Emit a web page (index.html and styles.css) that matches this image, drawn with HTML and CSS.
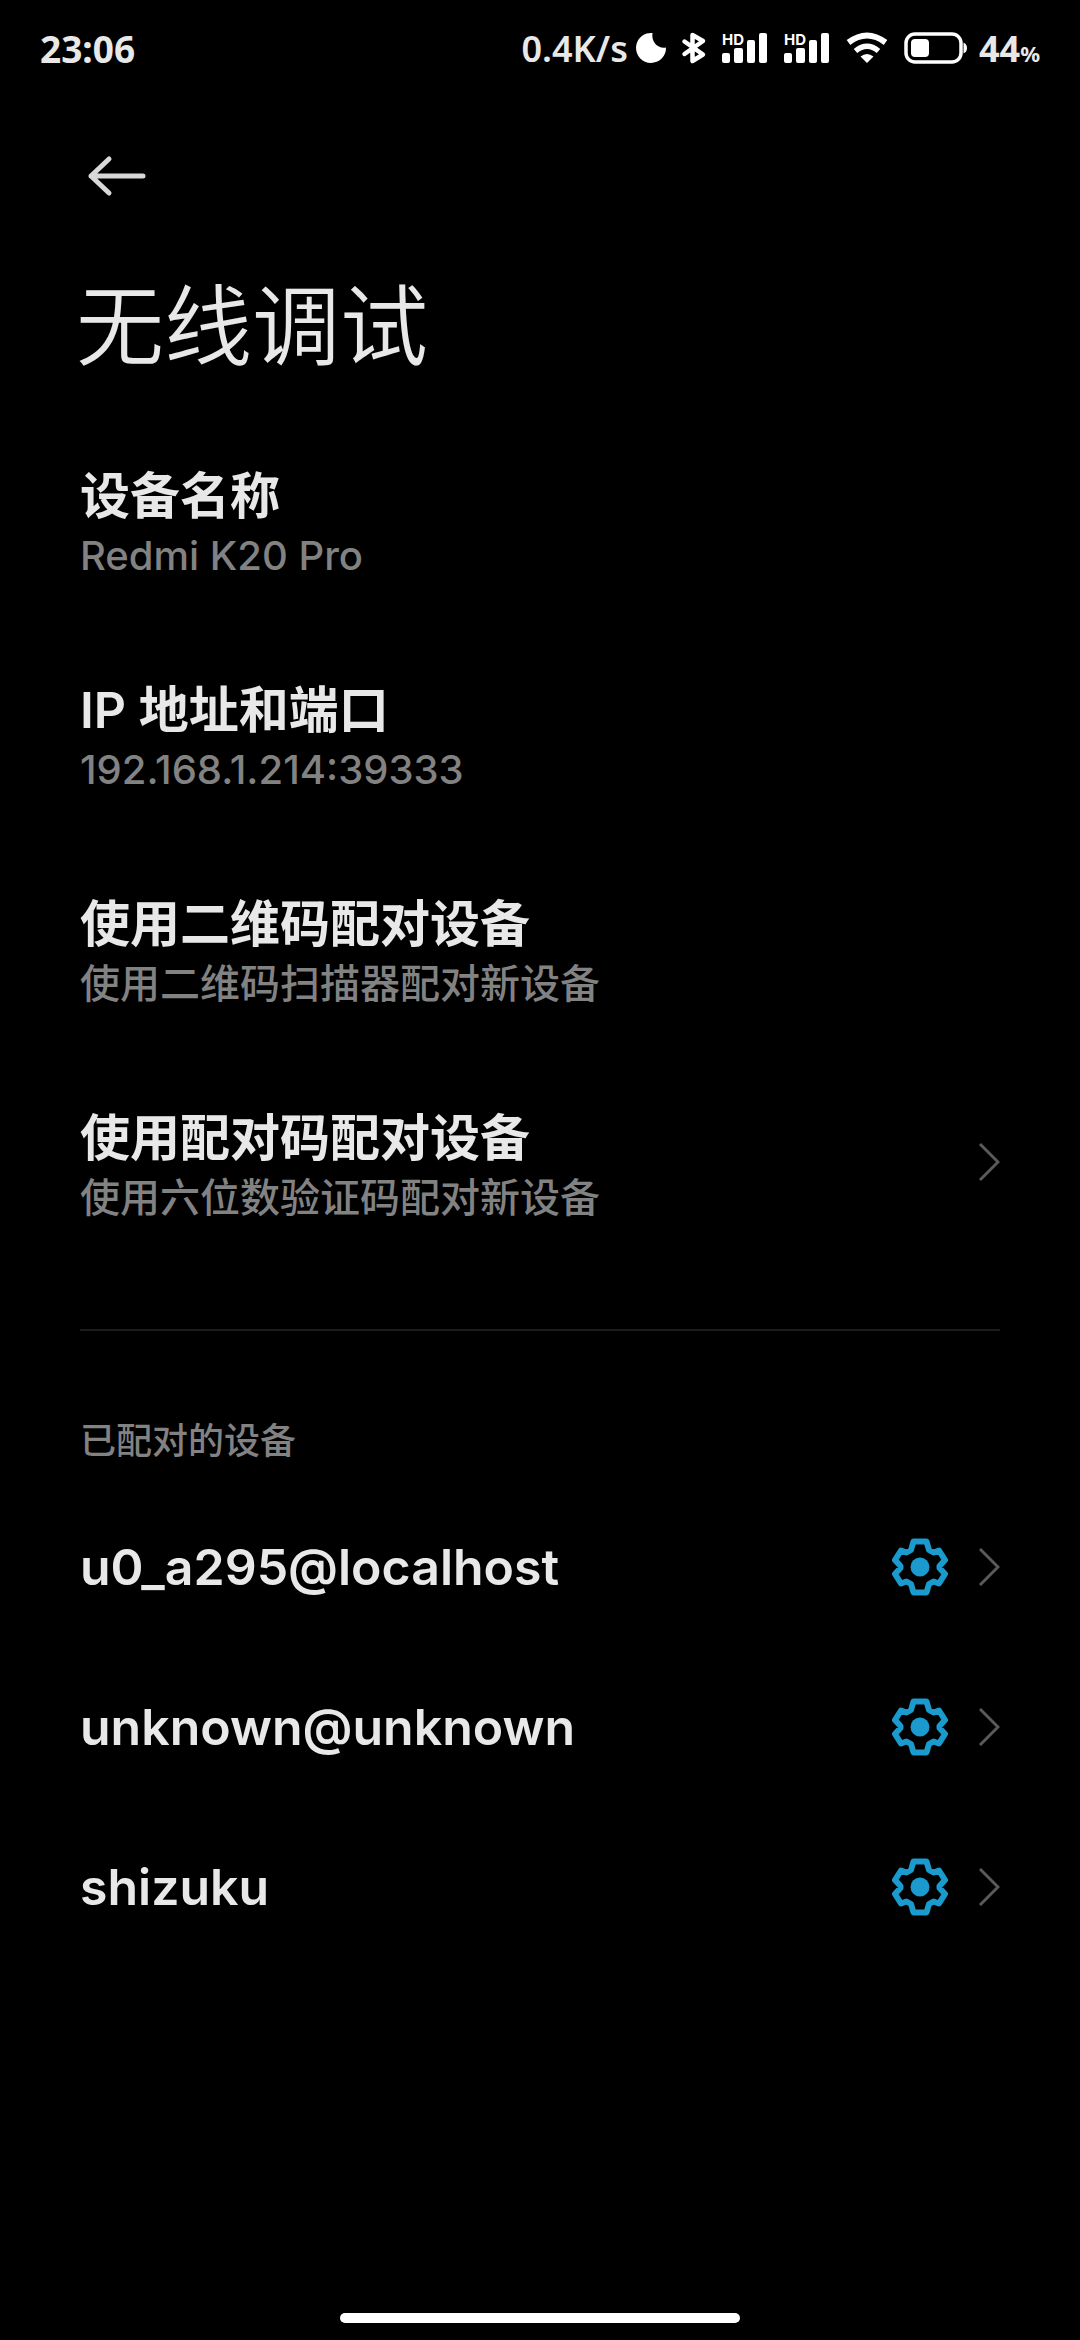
FILE: index.html
```
<!DOCTYPE html>
<html lang="zh-CN">
<head>
    <meta charset="UTF-8">
    <meta name="viewport" content="width=device-width, initial-scale=1.0">
    <title>无线调试</title>
    <link rel="stylesheet" href="styles.css">
</head>
<body>
    <!-- shared icons -->
    <svg class="sprite" width="0" height="0" aria-hidden="true">
        <symbol id="chevron" viewBox="0 0 22 40">
            <path d="M2 2 L20 20 L2 38" fill="none" stroke="#5a5a5a" stroke-width="3"/>
        </symbol>
        <symbol id="gear" viewBox="0 0 56 58">
            <path d="M21.500 3.500 H34.500 L37 12 L41.500 14.500 L47 12.500 L53 22 L47.500 28 V30 L53 36 L47 45.500 L41.500 43.500 L37 46 L34.500 54.500 H21.500 L19 46 L14.500 43.500 L9 45.500 L3 36 L8.500 30 V28 L3 22 L9 12.500 L14.500 14.500 L19 12 Z" fill="none" stroke="#1a9acd" stroke-width="6" stroke-linejoin="round"/>
            <circle cx="28" cy="29" r="9.500" fill="#1a9acd"/>
        </symbol>
    </svg>

    <div class="status-bar">
        <span class="time">23:06</span>
        <div class="status-icons">
            <span class="speed">0.4K/s</span>
            <svg class="moon" viewBox="0 0 30 32" width="30" height="32">
                <path d="M16.500 1 A15 15 0 1 0 30 15.500 C22 17 15 10 16.500 1 Z"/>
            </svg>
            <svg class="bluetooth" viewBox="0 0 24 32" width="24" height="32">
                <path d="M2.500 9.500 L21 22.500 L10.500 29 V3 L21 9 L2.500 22" fill="none" stroke="#fff" stroke-width="4.500" stroke-linejoin="round" stroke-linecap="round"/>
            </svg>
            <svg class="signal" viewBox="0 0 46 32" width="46" height="32">
                <text x="0" y="13" class="hd">HD</text>
                <rect x="0" y="21" width="8" height="10" rx="2"/>
                <rect x="12" y="16" width="9" height="15" rx="2"/>
                <rect x="25" y="8" width="8" height="23" rx="2"/>
                <rect x="37" y="1" width="8" height="30" rx="2"/>
            </svg>
            <svg class="signal" viewBox="0 0 46 32" width="46" height="32">
                <text x="0" y="13" class="hd">HD</text>
                <rect x="0" y="21" width="8" height="10" rx="2"/>
                <rect x="12" y="16" width="9" height="15" rx="2"/>
                <rect x="25" y="8" width="8" height="23" rx="2"/>
                <rect x="37" y="1" width="8" height="30" rx="2"/>
            </svg>
            <svg class="wifi" viewBox="0 0 42 32" width="42" height="32">
                <path d="M2.500 10.500 Q21 -3.500 39.500 10.500" fill="none" stroke="#fff" stroke-width="6"/>
                <path d="M9.500 19 Q21 9.500 32.500 19" fill="none" stroke="#fff" stroke-width="5.500"/>
                <path d="M14.500 24.500 Q21 19.500 27.500 24.500 L21 31 Z"/>
            </svg>
            <svg class="battery" viewBox="0 0 64 32" width="64" height="32">
                <rect x="2" y="2" width="55" height="28" rx="9" fill="none" stroke="#fff" stroke-width="3.500"/>
                <rect x="7" y="7" width="18" height="18" rx="4"/>
                <path d="M59.500 10.500 Q63 12 63 16 Q63 20 59.500 21.500 Z"/>
            </svg>
            <span class="percent">44<small>%</small></span>
        </div>
    </div>

    <header>
        <button class="back" aria-label="返回">
            <svg viewBox="0 0 58 40" width="58" height="40">
                <path d="M21 3 L3 20 L21 37 M3 20 H55" fill="none" stroke="#d8d8d8" stroke-width="5" stroke-linecap="round" stroke-linejoin="round"/>
            </svg>
        </button>
        <h1>无线调试</h1>
    </header>

    <main>
        <div class="item">
            <div class="item-text">
                <span class="item-title">设备名称</span>
                <span class="item-summary">Redmi K20 Pro</span>
            </div>
        </div>
        <div class="item">
            <div class="item-text">
                <span class="item-title">IP 地址和端口</span>
                <span class="item-summary">192.168.1.214:39333</span>
            </div>
        </div>
        <button class="item">
            <span class="item-text">
                <span class="item-title">使用二维码配对设备</span>
                <span class="item-summary">使用二维码扫描器配对新设备</span>
            </span>
        </button>
        <button class="item">
            <span class="item-text">
                <span class="item-title">使用配对码配对设备</span>
                <span class="item-summary">使用六位数验证码配对新设备</span>
            </span>
            <svg class="chevron" width="22" height="40"><use href="#chevron"/></svg>
        </button>

        <section class="paired">
            <h2>已配对的设备</h2>
            <button class="device">
                <span class="item-title">u0_a295@localhost</span>
                <svg class="gear" width="56" height="58"><use href="#gear"/></svg>
                <svg class="chevron" width="22" height="40"><use href="#chevron"/></svg>
            </button>
            <button class="device">
                <span class="item-title">unknown@unknown</span>
                <svg class="gear" width="56" height="58"><use href="#gear"/></svg>
                <svg class="chevron" width="22" height="40"><use href="#chevron"/></svg>
            </button>
            <button class="device">
                <span class="item-title">shizuku</span>
                <svg class="gear" width="56" height="58"><use href="#gear"/></svg>
                <svg class="chevron" width="22" height="40"><use href="#chevron"/></svg>
            </button>
        </section>
    </main>

    <div class="home-bar"></div>
</body>
</html>
```
FILE: styles.css
```
* {
    box-sizing: border-box;
}
body {
    display: flex;
    flex-direction: column;
    min-height: 100vh;
    margin: 0;
    background-color: #000;
    color: #e8e8e8;
    font-family: Inter, "Noto Sans CJK SC", sans-serif;
}
button {
    padding: 0;
    border: none;
    background: none;
    color: inherit;
    font-family: inherit;
    text-align: left;
    cursor: pointer;
}
svg {
    display: block;
    flex-shrink: 0;
    overflow: visible;
    fill: #fff;
}
.sprite {
    position: absolute;
}
.hd {
    font-family: Inter, sans-serif;
    font-size: 15px;
    font-weight: 700;
}

/* status bar */
.status-bar {
    display: flex;
    justify-content: space-between;
    align-items: center;
    height: 96px;
    padding: 0 40px;
    font-family: "Noto Sans", "Noto Sans CJK SC", sans-serif;
    font-size: 36px;
    font-weight: 600;
}
.time {
    font-size: 37px;
    font-weight: 700;
}
.status-icons {
    display: flex;
    align-items: center;
}
.moon {
    margin-left: 8px;
}
.bluetooth {
    margin-left: 16px;
}
.signal,
.wifi,
.battery {
    margin-left: 16px;
}
.percent {
    margin-left: 11px;
    font-weight: 700;
}
.percent small {
    font-size: 22px;
}

/* title */
header {
    padding: 60px 76px 0;
}
.back {
    display: block;
    margin-left: 12px;
}
h1 {
    margin: 66px 0 0;
    font-size: 88px;
    font-weight: 350;
    line-height: 128px;
}

/* settings list */
main {
    padding: 23px 80px 0;
}
.item {
    display: flex;
    align-items: center;
    justify-content: space-between;
    width: 100%;
    padding: 43px 0;
}
.item-text {
    display: flex;
    flex-direction: column;
    padding-top: 8px;
}
.item-title {
    font-size: 50px;
    font-weight: 600;
    line-height: 64px;
}
.item-summary {
    color: #828282;
    font-size: 40px;
    font-weight: 500;
    line-height: 56px;
}
.paired {
    margin-top: 60px;
    border-top: 2px solid #1c1c1c;
}
h2 {
    margin: 84px 0 20px;
    color: #828282;
    font-size: 36px;
    font-weight: 500;
    line-height: 52px;
}
.device {
    display: flex;
    align-items: center;
    width: 100%;
    height: 160px;
}
.device .item-title {
    flex: 1;
}
.device .chevron {
    margin-left: 30px;
}

.home-bar {
    width: 400px;
    height: 10px;
    margin: auto auto 17px;
    border-radius: 5px;
    background-color: #fff;
}
```
